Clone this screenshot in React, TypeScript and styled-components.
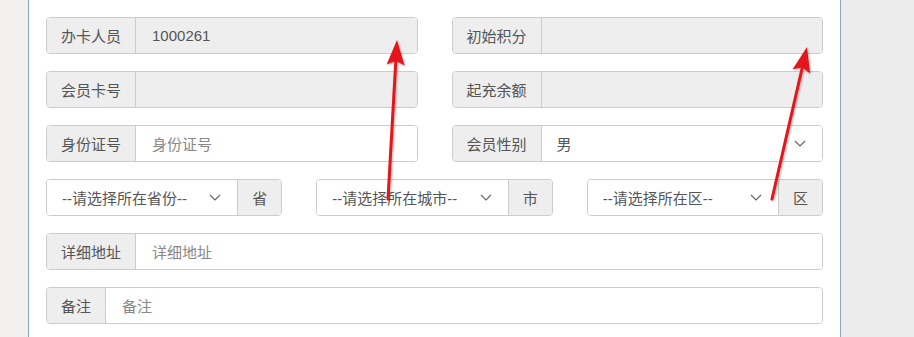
import React from 'react';
import styled, { createGlobalStyle } from 'styled-components';

const GlobalStyle = createGlobalStyle`
  html, body, #root {
    margin: 0;
    padding: 0;
    height: 100%;
    overflow: hidden;
  }
  body {
    font-family: 'Liberation Sans', 'Noto Sans CJK SC', sans-serif;
    font-size: 15px;
    color: #555;
    background: #ececec;
  }
`;

const Page = styled.div`
  position: relative;
  display: flex;
  height: 337px;
  width: 914px;
`;

const SideStrip = styled.div`
  width: 28px;
  background: linear-gradient(to right, #f1f0ef 0, #f1f0ef 20px, #f4f1ec 28px);
`;

const Panel = styled.div`
  background: #fff;
  border-left: 1px solid #86a9c3;
  border-right: 1px solid #8fa8bd;
  padding: 0 17px;
  box-sizing: border-box;
  width: 813px;
  overflow: hidden;
`;

const Form = styled.div`
  display: flex;
  flex-direction: column;
  gap: 17px;
  margin-top: -37px;
`;

const Row = styled.div<{ cols: number }>`
  display: grid;
  grid-template-columns: repeat(${p => p.cols}, 1fr);
  column-gap: 34px;
`;

const Group = styled.div`
  display: flex;
  height: 37px;
  border: 1px solid #ccc;
  border-radius: 4px;
  box-sizing: border-box;
  overflow: hidden;
`;

const Addon = styled.div<{ side?: 'left' | 'right' }>`
  flex: none;
  display: flex;
  align-items: center;
  padding: 0 14px;
  background: #eee;
  color: #555;
  font-size: 15px;
  ${p => (p.side === 'right' ? 'border-left: 1px solid #ccc;' : 'border-right: 1px solid #ccc;')}
`;

const Field = styled.div<{ disabled?: boolean }>`
  flex: 1;
  display: flex;
  align-items: center;
  padding: 0 14px 0 16px;
  background: ${p => (p.disabled ? '#eee' : '#fff')};
  color: #555;
  font-size: 15px;
  min-width: 0;
`;

const Placeholder = styled.span`
  color: #888;
`;

const SelectBox = styled.div`
  flex: 1;
  display: flex;
  align-items: center;
  padding: 0 16px 0 15px;
  background: #fff;
  color: #555;
  font-size: 15px;
  white-space: nowrap;
  min-width: 0;
`;

const Chevron = styled.svg`
  margin-left: auto;
  flex: none;
`;

const ArrowLayer = styled.svg`
  position: absolute;
  left: 0;
  top: 0;
  pointer-events: none;
`;

const Caret = () => (
  <Chevron width="12" height="7" viewBox="0 0 12 7">
    <path d="M1 1 L6 6 L11 1" fill="none" stroke="#666" strokeWidth="1.2" />
  </Chevron>
);

const Select: React.FC<{ text: string; unit?: string }> = ({ text, unit }) => (
  <Group>
    <SelectBox>
      {text}
      <Caret />
    </SelectBox>
    {unit && <Addon side="right">{unit}</Addon>}
  </Group>
);

const Input: React.FC<{ label: string; value?: string; placeholder?: string; disabled?: boolean }> = ({
  label,
  value,
  placeholder,
  disabled,
}) => (
  <Group>
    <Addon>{label}</Addon>
    <Field disabled={disabled}>
      {value ? value : placeholder ? <Placeholder>{placeholder}</Placeholder> : null}
    </Field>
  </Group>
);

const Arrow: React.FC<{ x1: number; y1: number; x2: number; y2: number }> = ({ x1, y1, x2, y2 }) => {
  const dx = x2 - x1;
  const dy = y2 - y1;
  const len = Math.sqrt(dx * dx + dy * dy);
  const ux = dx / len;
  const uy = dy / len;
  const headLen = 25;
  const headW = 9;
  const bx = x2 - ux * headLen;
  const by = y2 - uy * headLen;
  const px = -uy;
  const py = ux;
  const head = `${x2},${y2} ${bx + px * headW},${by + py * headW} ${bx + ux * 4},${by + uy * 4} ${bx - px * headW},${by - py * headW}`;
  return (
    <g filter="url(#shadow)">
      <line x1={x1} y1={y1} x2={bx + ux * 4} y2={by + uy * 4} stroke="#e3161c" strokeWidth="3" strokeLinecap="round" />
      <polygon points={head} fill="#e3161c" />
    </g>
  );
};

export default function App() {
  return (
    <>
      <GlobalStyle />
      <Page>
        <SideStrip />
        <Panel>
          <Form>
            {/* row scrolled above the top edge: only its lower border shows */}
            <Row cols={2}>
              <Group />
              <Group />
            </Row>
            <Row cols={2}>
              <Input label="办卡人员" value="1000261" disabled />
              <Input label="初始积分" disabled />
            </Row>
            <Row cols={2}>
              <Input label="会员卡号" disabled />
              <Input label="起充余额" disabled />
            </Row>
            <Row cols={2}>
              <Input label="身份证号" placeholder="身份证号" />
              <Group>
                <Addon>会员性别</Addon>
                <SelectBox>
                  男
                  <Caret />
                </SelectBox>
              </Group>
            </Row>
            <Row cols={3}>
              <Select text="--请选择所在省份--" unit="省" />
              <Select text="--请选择所在城市--" unit="市" />
              <Select text="--请选择所在区--" unit="区" />
            </Row>
            <Row cols={1}>
              <Input label="详细地址" placeholder="详细地址" />
            </Row>
            <Row cols={1}>
              <Input label="备注" placeholder="备注" />
            </Row>
          </Form>
        </Panel>
        <ArrowLayer width="914" height="337" viewBox="0 0 914 337">
          <defs>
            <filter id="shadow" x="-50%" y="-50%" width="200%" height="200%">
              <feDropShadow dx="1" dy="1" stdDeviation="1" floodColor="#000" floodOpacity="0.3" />
            </filter>
          </defs>
          <Arrow x1={388} y1={199} x2={397} y2={40} />
          <Arrow x1={772} y1={199} x2={807} y2={47} />
        </ArrowLayer>
      </Page>
    </>
  );
}
